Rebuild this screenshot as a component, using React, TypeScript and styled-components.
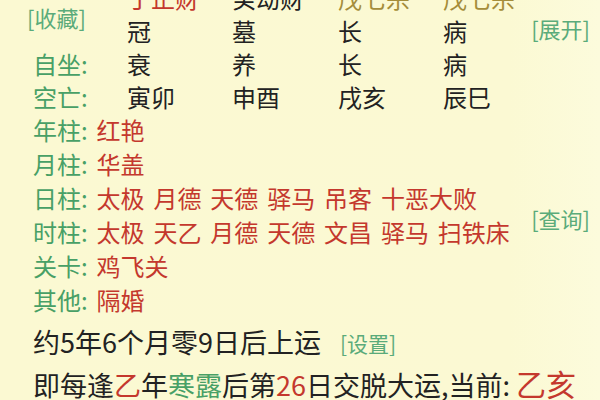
import React from "react";
import styled, { createGlobalStyle } from "styled-components";

const Global = createGlobalStyle`
  html, body {
    margin: 0;
    padding: 0;
    background: #fbf9d3;
    overflow: hidden;
  }
  body {
    font-family: "Noto Sans CJK SC", "Noto Sans", sans-serif;
    color: #222;
  }
`;

const Page = styled.div`
  width: 600px;
  height: 400px;
  box-sizing: border-box;
  padding: 0 10px 0 33px;
  background: linear-gradient(90deg, #fbf9d2 0%, #fbf9d3 85%, #fcfbdc 100%);
  overflow: hidden;
`;

const Table = styled.div`
  display: grid;
  grid-template-columns: 94px 105px 106px 105px 1fr auto;
  grid-auto-rows: 33px;
  margin-top: -19px;
  font-size: 24px;
  line-height: 33px;
`;

type Tone = "red" | "dark" | "olive" | "green";
const toneColor: Record<Tone, string> = {
  red: "#c4382d",
  dark: "#222222",
  olive: "#a58d3a",
  green: "#48a066",
};

const Cell = styled.div<{ $tone?: Tone }>`
  color: ${(p) => toneColor[p.$tone ?? "dark"]};
  white-space: nowrap;
`;

const Label = styled.div`
  color: #48a066;
  white-space: nowrap;
`;

const Link = styled.span<{ $size?: number }>`
  color: #5aab7a;
  font-size: ${(p) => p.$size ?? 21}px;
  white-space: nowrap;
`;

const CollectCell = styled.div`
  grid-column: 1;
  grid-row: 1 / span 2;
  align-self: center;
  padding-top: 6px;
  margin-left: -6px;
`;

const ExpandCell = styled.div`
  grid-column: 6;
  grid-row: 2;
  align-self: center;
  justify-self: end;
  line-height: 1;
  margin-top: -6px;
`;

const ShenshaBlock = styled.div`
  display: flex;
  align-items: center;
`;

const ShenshaList = styled.div`
  flex: 1;
  display: flex;
  flex-direction: column;
  font-size: 24px;
`;

const ShenshaRow = styled.div`
  height: 34px;
  line-height: 34px;
  white-space: nowrap;
  word-spacing: 3.5px;
`;

const Key = styled.span`
  color: #48a066;
`;

const Val = styled.span`
  color: #c4382d;
`;

const QueryWrap = styled.div`
  margin-top: 6px;
`;

const Footer = styled.div`
  margin-top: 5px;
  font-size: 27px;
  line-height: 40px;
  color: #222;
`;

const FootLine = styled.div`
  white-space: nowrap;
`;

const SetLink = styled(Link)`
  margin-left: 19px;
  vertical-align: 1px;
`;

const Hi = styled.span<{ $tone: Tone; $size?: number }>`
  color: ${(p) => toneColor[p.$tone]};
  ${(p) => (p.$size ? `font-size: ${p.$size}px;` : "")}
`;

const rows: { label?: string; cells: { t: string; tone: Tone }[] }[] = [
  {
    cells: [
      { t: "丁正财", tone: "red" },
      { t: "癸劫财", tone: "dark" },
      { t: "戊七杀", tone: "olive" },
      { t: "戊七杀", tone: "olive" },
    ],
  },
  {
    cells: [
      { t: "冠", tone: "dark" },
      { t: "墓", tone: "dark" },
      { t: "长", tone: "dark" },
      { t: "病", tone: "dark" },
    ],
  },
  {
    label: "自坐:",
    cells: [
      { t: "衰", tone: "dark" },
      { t: "养", tone: "dark" },
      { t: "长", tone: "dark" },
      { t: "病", tone: "dark" },
    ],
  },
  {
    label: "空亡:",
    cells: [
      { t: "寅卯", tone: "dark" },
      { t: "申酉", tone: "dark" },
      { t: "戌亥", tone: "dark" },
      { t: "辰巳", tone: "dark" },
    ],
  },
];

const shensha: { k: string; v: string }[] = [
  { k: "年柱", v: "红艳" },
  { k: "月柱", v: "华盖" },
  { k: "日柱", v: "太极 月德 天德 驿马 吊客 十恶大败" },
  { k: "时柱", v: "太极 天乙 月德 天德 文昌 驿马 扫铁床" },
  { k: "关卡", v: "鸡飞关" },
  { k: "其他", v: "隔婚" },
];

export default function App() {
  return (
    <>
      <Global />
      <Page>
        <Table>
          <CollectCell>
            <Link $size={22}>[收藏]</Link>
          </CollectCell>
          {rows.map((r, ri) => (
            <React.Fragment key={ri}>
              {r.label ? (
                <Label style={{ gridRow: ri + 1, gridColumn: 1 }}>{r.label}</Label>
              ) : null}
              {r.cells.map((c, ci) => (
                <Cell
                  key={ci}
                  $tone={c.tone}
                  style={{ gridRow: ri + 1, gridColumn: ci + 2 }}
                >
                  {c.t}
                </Cell>
              ))}
            </React.Fragment>
          ))}
          <ExpandCell>
            <Link $size={22}>[展开]</Link>
          </ExpandCell>
        </Table>

        <ShenshaBlock>
          <ShenshaList>
            {shensha.map((s) => (
              <ShenshaRow key={s.k}>
                <Key>{s.k}:</Key> <Val>{s.v}</Val>
              </ShenshaRow>
            ))}
          </ShenshaList>
          <QueryWrap>
            <Link $size={22}>[查询]</Link>
          </QueryWrap>
        </ShenshaBlock>

        <Footer>
          <FootLine>
            约5年6个月零9日后上运<SetLink $size={21}>[设置]</SetLink>
          </FootLine>
          <FootLine>
            即每逢<Hi $tone="red">乙</Hi>年<Hi $tone="green">寒露</Hi>后第
            <Hi $tone="red">26</Hi>日交脱大运,当前: <Hi $tone="red" $size={30}>乙亥</Hi>
          </FootLine>
        </Footer>
      </Page>
    </>
  );
}
